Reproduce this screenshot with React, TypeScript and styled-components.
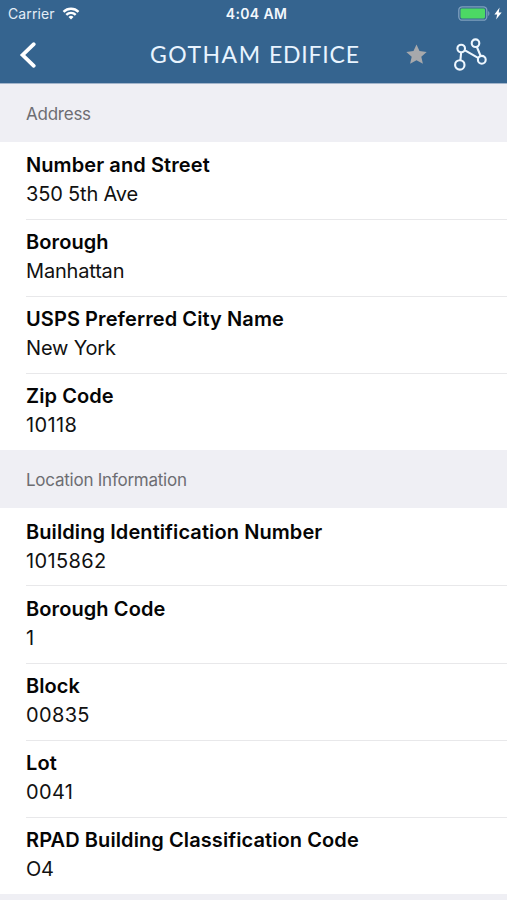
import React from "react";
import styled, { createGlobalStyle } from "styled-components";

const GlobalStyle = createGlobalStyle`
  * { box-sizing: border-box; }
  body { margin: 0; background: #fff; font-family: Inter, "Liberation Sans", sans-serif; }
`;

const Screen = styled.main`
  width: 507px;
  height: 900px;
  overflow: hidden;
  display: flex;
  flex-direction: column;
  background: #efeff4;
`;

const Header = styled.header`
  flex: none;
  height: 84px;
  background: #35648f;
  border-bottom: 1px solid #a3b5cb;
  color: #fff;
`;

const StatusBar = styled.div`
  height: 27px;
  padding: 0 5px 0 8px;
  display: grid;
  grid-template-columns: 1fr auto 1fr;
  align-items: center;
  font-size: 14px;
  line-height: 27px;
`;

const StatusGroup = styled.div<{ $end?: boolean }>`
  display: flex;
  align-items: center;
  justify-content: ${(p) => (p.$end ? "flex-end" : "flex-start")};
  gap: ${(p) => (p.$end ? "4px" : "7px")};
`;

const Carrier = styled.span`
  color: #e3edf7;
  letter-spacing: 0.1px;
`;

const Clock = styled.time`
  padding-left: 3px;
  font-weight: 600;
  letter-spacing: 0.35px;
  color: #f3f8fd;
`;

const NavBar = styled.nav`
  height: 56px;
  padding: 0 19px 0 18px;
  display: grid;
  grid-template-columns: 132px 1fr 48px 34px;
  align-items: center;
`;

const IconButton = styled.button`
  padding: 0;
  border: 0;
  background: none;
  color: inherit;
  display: flex;
  align-items: center;
`;

const Title = styled.h1`
  margin: 0;
  padding-bottom: 2px;
  display: flex;
  font: 400 23px/52px Lato, sans-serif;
  white-space: pre;
  color: #e9f4ff;
`;

const TitleWord = styled.span<{ $tracking: number }>`
  letter-spacing: ${(p) => p.$tracking}px;
`;

const SectionTitle = styled.h2`
  margin: 0;
  height: 58px;
  padding: 1px 26px 0;
  font-size: 17px;
  font-weight: 400;
  line-height: 59px;
  letter-spacing: -0.24px;
  color: #6d6d72;
`;

const Rows = styled.dl`
  margin: 0;
  padding-left: 26px;
  background: #fff;
`;

const Row = styled.div`
  height: 77.1px;
  padding-top: 9.2px;
  & + & {
    padding-top: 8.1px;
    border-top: 1px solid #e8e8ea;
  }
`;

const Label = styled.dt`
  font-size: 20px;
  font-weight: 600;
  line-height: 29px;
  letter-spacing: 0.09px;
  color: #050505;
`;

const Value = styled.dd<{ $numeric: boolean }>`
  margin: 0;
  font-size: 20px;
  line-height: 29px;
  letter-spacing: ${(p) => (p.$numeric ? 0.35 : -0.18)}px;
  color: #111;
`;

const sections = [
  {
    title: "Address",
    rows: [
      ["Number and Street", "350 5th Ave"],
      ["Borough", "Manhattan"],
      ["USPS Preferred City Name", "New York"],
      ["Zip Code", "10118"],
    ],
  },
  {
    title: "Location Information",
    rows: [
      ["Building Identification Number", "1015862"],
      ["Borough Code", "1"],
      ["Block", "00835"],
      ["Lot", "0041"],
      ["RPAD Building Classification Code", "O4"],
    ],
  },
];

const WifiIcon = () => (
  <svg width="18" height="13" viewBox="0 0 17 13" fill="none" stroke="#fff" strokeWidth="2.4">
    <path d="M1 4.8a10.8 10.8 0 0 1 15 0" />
    <path d="M3.8 7.8a6.8 6.8 0 0 1 9.4 0" />
    <path d="M8.5 12.5 6 10a3.6 3.6 0 0 1 5 0z" fill="#fff" stroke="none" />
  </svg>
);

const BatteryIcon = () => (
  <svg width="32" height="15" viewBox="0 0 32 15">
    <rect x="0.8" y="0.8" width="28" height="13.4" rx="3.5" fill="none" stroke="#7fa0be" strokeWidth="1.3" />
    <rect x="2.5" y="2.6" width="24.5" height="9.8" rx="1.4" fill="#4cd964" />
    <path d="M30.2 5c1.6.8 1.6 4.2 0 5z" fill="#7fa0be" />
  </svg>
);

const BoltIcon = () => (
  <svg width="8" height="13" viewBox="0 0 8 13" fill="#fff">
    <path d="M5.6.5.4 7.4h2.8L2.1 12.5 7.7 5.4H4.7z" />
  </svg>
);

const BackIcon = () => (
  <svg width="20" height="28" viewBox="0 0 20 28" fill="none" stroke="#fff" strokeWidth="3.8">
    <path d="M15.8 3.2 4.6 14l11.2 10.8" strokeLinecap="round" />
  </svg>
);

const StarIcon = () => (
  <svg width="21" height="23" viewBox="0 0 21 23" fill="#a7a9ac">
    <path d="m10.5.5 3 6.6 7.2.8-5.4 4.8 1.6 7.1-6.4-3.6-6.4 3.6 1.6-7.1L.3 7.9l7.2-.8z" />
  </svg>
);

const GraphIcon = () => (
  <svg width="34" height="34" viewBox="0 0 34 34" fill="none" stroke="#eef7ff" strokeWidth="2.1">
    <path d="M6.4 22.2 7.2 14M10.6 12.2l13.9 8M22.9 9l3.8 9.2" />
    <circle cx="5.8" cy="26.9" r="4.7" />
    <circle cx="7.2" cy="10.5" r="3.8" />
    <circle cx="21.5" cy="5.2" r="3.8" />
    <circle cx="27.8" cy="21.8" r="3.9" />
  </svg>
);

export default function App() {
  return (
    <Screen>
      <GlobalStyle />
      <Header>
        <StatusBar>
          <StatusGroup>
            <Carrier>Carrier</Carrier>
            <WifiIcon />
          </StatusGroup>
          <Clock>4:04 AM</Clock>
          <StatusGroup $end>
            <BatteryIcon />
            <BoltIcon />
          </StatusGroup>
        </StatusBar>
        <NavBar>
          <IconButton aria-label="Back"><BackIcon /></IconButton>
          <Title>
            <TitleWord $tracking={1.5}>GOTHAM </TitleWord>
            <TitleWord $tracking={0.8}>EDIFICE</TitleWord>
          </Title>
          <IconButton aria-label="Favorite"><StarIcon /></IconButton>
          <IconButton aria-label="Connections"><GraphIcon /></IconButton>
        </NavBar>
      </Header>
      {sections.map((section) => (
        <section key={section.title}>
          <SectionTitle>{section.title}</SectionTitle>
          <Rows>
            {section.rows.map(([label, value]) => (
              <Row key={label}>
                <Label>{label}</Label>
                <Value $numeric={/^\d+$/.test(value)}>{value}</Value>
              </Row>
            ))}
          </Rows>
        </section>
      ))}
    </Screen>
  );
}
